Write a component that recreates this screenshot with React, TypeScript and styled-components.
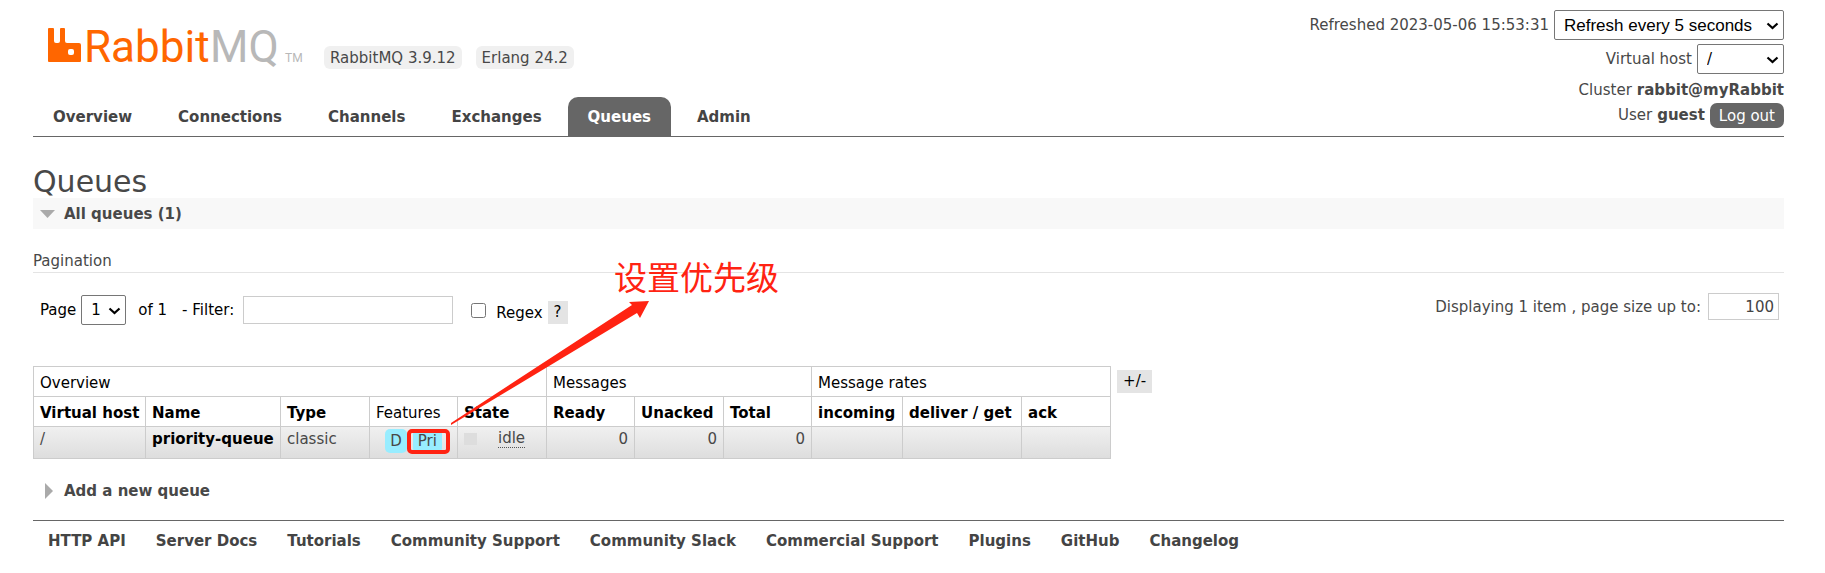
import React from "react";
import styled, { createGlobalStyle } from "styled-components";

const GlobalStyle = createGlobalStyle`
  * { box-sizing: border-box; }
  body {
    margin: 0;
    background: #fff;
    color: #484848;
    font: 15px/20px Verdana, "DejaVu Sans", sans-serif;
  }
  button, input { font: inherit; }
`;

const Page = styled.div`
  position: relative;
  padding: 0 41px 0 33px;
`;

const Header = styled.header`
  display: flex;
  justify-content: space-between;
  border-bottom: 1px solid #666;
`;

const Brand = styled.div`
  display: flex;
  flex-direction: column;
  justify-content: space-between;
  padding-top: 19px;
`;

const BrandRow = styled.div`
  display: flex;
  align-items: flex-end;
  gap: 14px;
  padding-left: 14px;
`;

const LogoLink = styled.a`
  display: block;
  margin: 0 5px -5px 0;
  svg { display: block; }
`;

const Version = styled.span`
  padding: 3px 6px 2px;
  border-radius: 6px;
  background: #f0f0f0;
  line-height: 18px;
`;

const Tabs = styled.nav`
  display: flex;
  gap: 6px;
`;

const Tab = styled.a<{ $active?: boolean }>`
  padding: 10px 20px 9px;
  border-radius: 10px 10px 0 0;
  background: ${(p) => (p.$active ? "#666" : "transparent")};
  color: ${(p) => (p.$active ? "#fff" : "#444")};
  font-weight: bold;
  text-decoration: none;
`;

const Status = styled.div`
  display: flex;
  flex-direction: column;
  align-items: flex-end;
  padding: 10px 0 8px;
`;

const StatusRow = styled.div<{ $height: number }>`
  display: flex;
  align-items: center;
  gap: 5px;
  height: ${(p) => p.$height}px;
  margin-bottom: ${(p) => (p.$height > 26 ? 4 : 0)}px;
`;

const LogOut = styled.button`
  padding: 3px 9px 2px;
  border: 0;
  border-radius: 7px;
  background: #666;
  color: #fff;
`;

const SelectBox = styled.span<{ $width: number }>`
  position: relative;
  display: inline-block;
  width: ${(p) => p.$width}px;
  height: 30px;
  svg {
    position: absolute;
    right: 5px;
    top: 12px;
    pointer-events: none;
  }
`;

const Select = styled.select<{ $plain?: boolean }>`
  width: 100%;
  height: 100%;
  padding: 0 9px;
  appearance: none;
  border: 1px solid #767676;
  border-radius: 2px;
  background: #fff;
  color: #000;
  font: ${(p) => (p.$plain ? '17px "Liberation Sans", sans-serif' : '15px Verdana, "DejaVu Sans", sans-serif')};
`;

const Title = styled.h1`
  margin: 28px 0 0;
  font-size: 30px;
  line-height: 33px;
  font-weight: normal;
`;

const SectionHead = styled.h2<{ $open?: boolean }>`
  display: flex;
  align-items: center;
  margin: 0;
  padding: 6px 0 5px 7px;
  background: ${(p) => (p.$open ? "#f8f8f8" : "transparent")};
  font-size: 15px;
  line-height: 20px;
  svg { margin-right: 9px; }
`;

const SubHead = styled.h3`
  margin: 20px 0 0;
  padding: 2px 0 0;
  border-bottom: 1px solid #e4e4e4;
  font-size: 15px;
  line-height: 21px;
  font-weight: normal;
`;

const Filters = styled.form`
  display: flex;
  justify-content: space-between;
  align-items: flex-start;
  padding: 20px 5px 0 7px;
`;

const FilterGroup = styled.div`
  display: flex;
  align-items: center;
  padding-top: 2px;
  color: #000;
  > button { margin-top: 4px; }
`;

const PageLabel = styled.label`
  display: flex;
  align-items: center;
  gap: 5px;
`;

const PageCount = styled.span`
  margin: 0 15px 0 12px;
`;

const FilterInput = styled.input`
  width: 210px;
  height: 28px;
  margin-left: 9px;
  border: 1px solid #ccc;
`;

const RegexLabel = styled.label`
  display: flex;
  align-items: center;
  gap: 10px;
  margin: 0 5px 0 18px;
  padding-top: 6px;
  input {
    width: 15px;
    height: 15px;
    margin: 0 0 6px;
  }
`;

const GreyButton = styled.button`
  height: 23px;
  padding: 0 6px;
  border: 0;
  background: #e4e4e4;
  color: #000;
  line-height: 23px;
`;

const SizeLabel = styled.label`
  display: flex;
  align-items: center;
  gap: 7px;
  input {
    width: 71px;
    height: 27px;
    padding: 0 4px;
    border: 1px solid #ccc;
    color: #444;
    text-align: right;
  }
`;

const TableRow = styled.div`
  display: flex;
  align-items: flex-start;
  gap: 6px;
  margin-top: 41px;
  > button { margin-top: 4px; }
`;

const QueueTable = styled.table`
  width: 1077px;
  table-layout: fixed;
  border-collapse: collapse;
  color: #000;
  th, td {
    height: 30px;
    padding: 2px 6px 0;
    border: 1px solid #ccc;
    text-align: left;
    white-space: nowrap;
  }
  td {
    height: 32px;
    vertical-align: top;
    color: #484848;
  }
  tbody tr { background: linear-gradient(#f0f0f0, #dddddd); }
`;

const PlainTh = styled.th`
  font-weight: normal;
`;

const NumberTd = styled.td`
  && { text-align: right; }
`;

const NameLink = styled.a`
  color: #000;
  font-weight: bold;
  text-decoration: none;
`;

const Features = styled.div`
  display: flex;
  justify-content: center;
  gap: 6px;
`;

const Feature = styled.abbr<{ $marked?: boolean }>`
  position: relative;
  padding: 1px 5px;
  border-radius: 5px;
  background: #98edff;
  line-height: 22px;
  &::after {
    content: "";
    display: ${(p) => (p.$marked ? "block" : "none")};
    position: absolute;
    inset: 0 -8px -1px -6px;
    border: 4px solid #ff2312;
    border-radius: 5px;
  }
`;

const State = styled.div`
  display: flex;
  align-items: center;
  gap: 21px;
  &::before {
    content: "";
    width: 13px;
    height: 12px;
    background: #ddd;
  }
  abbr {
    border-bottom: 1px dotted #555;
    line-height: 18px;
  }
`;

const AddQueue = styled.section`
  margin-top: 16px;
`;

const Footer = styled.footer`
  display: flex;
  gap: 30px;
  margin-top: 14px;
  padding: 10px 15px;
  border-top: 1px solid #666;
  a {
    color: #444;
    font-weight: bold;
    text-decoration: none;
  }
`;

const Note = styled.div`
  position: absolute;
  left: 614px;
  top: 254px;
  color: #ff2312;
  font: 33px/44px "Noto Sans CJK SC", sans-serif;
`;

const Arrow = styled.svg`
  position: absolute;
  left: 449px;
  top: 299px;
  pointer-events: none;
`;

const Chevron = () => (
  <svg width="13" height="8" viewBox="0 0 13 8" aria-hidden="true">
    <path d="M1.5 1.5 L6.5 6 L11.5 1.5" fill="none" stroke="#000" strokeWidth="2.2" />
  </svg>
);

const Logo = () => (
  <svg width="258" height="55" viewBox="0 -3 258 55" fontFamily="Roboto, sans-serif" role="img" aria-label="RabbitMQ">
    <path
      fill="#f60"
      fillRule="evenodd"
      d="M2 6h4q1 0 1 1v12q0 2 2 2h2q2 0 2-2V7q0-1 1-1h3q1 0 1 1v12q0 2 2 2h12q2 0 2 2v16q0 1-1 1H2q-1 0-1-1V7q0-1 1-1zM23 27q-2 0-2 2v2q0 2 2 2h2q2 0 2-2v-2q0-2-2-2z"
    />
    <text x="37" y="40" fontSize="44" fill="#f60">Rabbit</text>
    <text x="163" y="40" fontSize="44" fill="#b8b8b8">MQ</text>
    <text x="238" y="40" fontSize="12" fill="#b8b8b8">TM</text>
  </svg>
);

const tabs = ["Overview", "Connections", "Channels", "Exchanges", "Queues", "Admin"];
const links = [
  "HTTP API", "Server Docs", "Tutorials", "Community Support", "Community Slack",
  "Commercial Support", "Plugins", "GitHub", "Changelog",
];
const columns = [112, 135, 89, 88, 89, 88, 89, 88, 91, 119, 89];

export default function App() {
  return (
    <Page>
      <GlobalStyle />
      <Header>
        <Brand>
          <BrandRow>
            <LogoLink href="#"><Logo /></LogoLink>
            <Version>RabbitMQ 3.9.12</Version>
            <Version>Erlang 24.2</Version>
          </BrandRow>
          <Tabs>
            {tabs.map((t) => <Tab key={t} href="#" $active={t === "Queues"}>{t}</Tab>)}
          </Tabs>
        </Brand>
        <Status>
          <StatusRow $height={30}>
            <label htmlFor="refresh">Refreshed 2023-05-06 15:53:31</label>
            <SelectBox $width={230}>
              <Select id="refresh" $plain><option>Refresh every 5 seconds</option></Select>
              <Chevron />
            </SelectBox>
          </StatusRow>
          <StatusRow $height={30}>
            <label htmlFor="vhost">Virtual host</label>
            <SelectBox $width={87}>
              <Select id="vhost"><option>/</option></Select>
              <Chevron />
            </SelectBox>
          </StatusRow>
          <StatusRow $height={24}>Cluster <b>rabbit@myRabbit</b></StatusRow>
          <StatusRow $height={26}>User <b>guest</b> <LogOut>Log out</LogOut></StatusRow>
        </Status>
      </Header>

      <main>
        <Title>Queues</Title>
        <SectionHead $open>
          <svg width="15" height="8" aria-hidden="true"><path d="M0 0h15L7.500 8z" fill="#aaa" /></svg>
          All queues (1)
        </SectionHead>
        <SubHead>Pagination</SubHead>
        <Filters>
          <FilterGroup>
            <PageLabel>
              Page
              <SelectBox $width={45}>
                <Select><option>1</option></Select>
                <Chevron />
              </SelectBox>
            </PageLabel>
            <PageCount>of 1</PageCount>
            <label htmlFor="filter">- Filter:</label>
            <FilterInput id="filter" type="text" />
            <RegexLabel><input type="checkbox" />Regex</RegexLabel>
            <GreyButton type="button">?</GreyButton>
          </FilterGroup>
          <SizeLabel>
            Displaying 1 item , page size up to:
            <input type="text" defaultValue="100" />
          </SizeLabel>
        </Filters>

        <TableRow>
          <QueueTable>
            <colgroup>{columns.map((w, i) => <col key={i} width={w} />)}</colgroup>
            <thead>
              <tr>
                <PlainTh colSpan={5}>Overview</PlainTh>
                <PlainTh colSpan={3}>Messages</PlainTh>
                <PlainTh colSpan={3}>Message rates</PlainTh>
              </tr>
              <tr>
                <th>Virtual host</th>
                <th>Name</th>
                <th>Type</th>
                <PlainTh>Features</PlainTh>
                <th>State</th>
                <th>Ready</th>
                <th>Unacked</th>
                <th>Total</th>
                <th>incoming</th>
                <th>deliver / get</th>
                <th>ack</th>
              </tr>
            </thead>
            <tbody>
              <tr>
                <td>/</td>
                <td><NameLink href="#">priority-queue</NameLink></td>
                <td>classic</td>
                <td><Features><Feature>D</Feature><Feature $marked>Pri</Feature></Features></td>
                <td><State><abbr>idle</abbr></State></td>
                <NumberTd>0</NumberTd>
                <NumberTd>0</NumberTd>
                <NumberTd>0</NumberTd>
                <td /><td /><td />
              </tr>
            </tbody>
          </QueueTable>
          <GreyButton type="button">+/-</GreyButton>
        </TableRow>

        <AddQueue>
          <SectionHead>
            <svg width="15" height="16" aria-hidden="true"><path d="M5 0v16L13 8z" fill="#aaa" /></svg>
            Add a new queue
          </SectionHead>
        </AddQueue>
      </main>

      <Footer>{links.map((l) => <a key={l} href="#">{l}</a>)}</Footer>

      <Arrow width="202" height="128" aria-hidden="true">
        <path d="M2 124L183 6L180 3L200 2L191 19L188 14L2 126Z" fill="#ff2312" />
      </Arrow>
      <Note>设置优先级</Note>
    </Page>
  );
}
